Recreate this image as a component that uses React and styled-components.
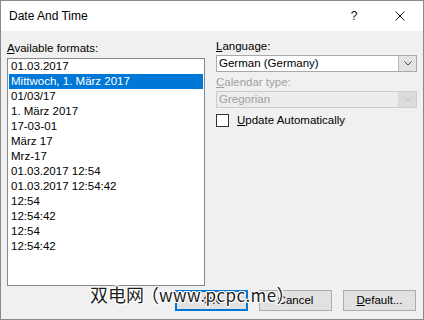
import React from "react";
import styled, { createGlobalStyle } from "styled-components";

const Global = createGlobalStyle`
  html, body { margin: 0; padding: 0; background: #fff; }
  * { box-sizing: border-box; }
`;

const Window = styled.div`
  position: relative;
  width: 424px;
  height: 320px;
  border: 1px solid #8a8a8a;
  background: #f0f0f0;
  display: flex;
  flex-direction: column;
  font-family: "Liberation Sans", Arial, sans-serif;
  font-size: 11.5px;
  color: #000;
  overflow: hidden;
`;

const TitleBar = styled.div`
  height: 30px;
  flex: none;
  background: #fff;
  display: flex;
  align-items: center;
`;

const Title = styled.div`
  flex: 1;
  padding-left: 8px;
  font-size: 12px;
  padding-bottom: 1px;
`;

const CaptionButton = styled.div`
  width: 46px;
  height: 30px;
  display: flex;
  align-items: center;
  justify-content: center;
  font-size: 12px;
  color: #111;
`;

const Body = styled.div`
  flex: 1;
  display: flex;
  flex-direction: column;
  padding: 8px 6px 8px 6px;
`;

const Main = styled.div`
  display: flex;
  gap: 11px;
`;

const LeftCol = styled.div`
  width: 198px;
  margin-top: 2px;
  display: flex;
  flex-direction: column;
`;

const RightCol = styled.div`
  width: 201px;
  display: flex;
  flex-direction: column;
`;

const Label = styled.div`
  height: 15px;
  line-height: 15px;
  color: ${(p) => (p.$disabled ? "#a0a0a0" : "#000")};
  margin-top: ${(p) => p.$top || 0}px;
  white-space: nowrap;
`;

const Key = styled.span`
  text-decoration: underline;
  text-underline-offset: 1px;
`;

const List = styled.div`
  margin-top: 2px;
  height: 228px;
  border: 1px solid #828790;
  background: #fff;
  padding: 0 1px;
  overflow: hidden;
`;

const Item = styled.div`
  height: 15px;
  line-height: 15px;
  padding-left: 2px;
  white-space: nowrap;
  background: ${(p) => (p.$selected ? "#0078d7" : "transparent")};
  color: ${(p) => (p.$selected ? "#fff" : "#000")};
`;

const Combo = styled.div`
  margin-top: 1px;
  height: 17px;
  display: flex;
  border: 1px solid ${(p) => (p.$disabled ? "#cccccc" : "#a9a9a9")};
  background: ${(p) => (p.$disabled ? "#ececec" : "#fff")};
  color: ${(p) => (p.$disabled ? "#a0a0a0" : "#000")};
`;

const ComboText = styled.div`
  flex: 1;
  line-height: 15px;
  padding-left: 2px;
  white-space: nowrap;
`;

const ComboButton = styled.div`
  width: 18px;
  display: flex;
  align-items: center;
  justify-content: center;
  border-left: 1px solid ${(p) => (p.$disabled ? "#d6d6d6" : "#b9b9b9")};
  background: ${(p) => (p.$disabled ? "#dcdcdc" : "#e3e3e3")};
`;

const CheckRow = styled.div`
  margin-top: 6px;
  height: 13px;
  display: flex;
  align-items: center;
  gap: 8px;
  line-height: 13px;
`;

const CheckBox = styled.div`
  width: 13px;
  height: 13px;
  border: 1px solid #333;
  background: #fff;
`;

const Footer = styled.div`
  margin-top: 4px;
  padding-right: 1px;
  display: flex;
  justify-content: flex-end;
  gap: 11px;
`;

const Button = styled.div`
  width: 73px;
  height: 21px;
  border: ${(p) => (p.$default ? "2px solid #0078d7" : "1px solid #adadad")};
  background: #e1e1e1;
  display: flex;
  align-items: center;
  justify-content: center;
  line-height: 19px;
`;

const Watermark = styled.div`
  position: absolute;
  left: 89px;
  top: 282px;
  font-family: "Noto Sans CJK SC", sans-serif;
  font-size: 18px;
  line-height: 22px;
  color: #1c1c1c;
  white-space: nowrap;
  text-shadow: 1px 0 0 #fff, -1px 0 0 #fff, 0 1px 0 #fff, 0 -1px 0 #fff,
    1px 1px 0 #fff, -1px -1px 0 #fff, 1px -1px 0 #fff, -1px 1px 0 #fff;
`;

const WatermarkParen = styled.span`
  margin-left: -3px;
`;

const WatermarkLatin = styled.span`
  font-size: 17px;
  letter-spacing: 0.4px;
`;

const Chevron = ({ color }) => (
  <svg width="8" height="5" viewBox="0 0 8 5">
    <polyline points="0.5,0.5 4,4 7.5,0.5" fill="none" stroke={color} strokeWidth="1" />
  </svg>
);

const CloseIcon = () => (
  <svg width="10" height="10" viewBox="0 0 10 10">
    <path d="M0.5 0.5 L9.5 9.5 M9.5 0.5 L0.5 9.5" stroke="#111" strokeWidth="1" />
  </svg>
);

const formats = [
  "01.03.2017",
  "Mittwoch, 1. März 2017",
  "01/03/17",
  "1. März 2017",
  "17-03-01",
  "März 17",
  "Mrz-17",
  "01.03.2017 12:54",
  "01.03.2017 12:54:42",
  "12:54",
  "12:54:42",
  "12:54",
  "12:54:42",
];

export default function App() {
  return (
    <>
      <Global />
      <Window>
        <TitleBar>
          <Title>Date And Time</Title>
          <CaptionButton>?</CaptionButton>
          <CaptionButton>
            <CloseIcon />
          </CaptionButton>
        </TitleBar>
        <Body>
          <Main>
            <LeftCol>
              <Label>
                <Key>A</Key>vailable formats:
              </Label>
              <List>
                {formats.map((f, i) => (
                  <Item key={i} $selected={i === 1}>
                    {f}
                  </Item>
                ))}
              </List>
            </LeftCol>
            <RightCol>
              <Label>
                <Key>L</Key>anguage:
              </Label>
              <Combo>
                <ComboText>German (Germany)</ComboText>
                <ComboButton>
                  <Chevron color="#444" />
                </ComboButton>
              </Combo>
              <Label $disabled $top={3}>
                <Key>C</Key>alendar type:
              </Label>
              <Combo $disabled>
                <ComboText>Gregorian</ComboText>
                <ComboButton $disabled>
                  <Chevron color="#b8b8b8" />
                </ComboButton>
              </Combo>
              <CheckRow>
                <CheckBox />
                <span>
                  <Key>U</Key>pdate Automatically
                </span>
              </CheckRow>
            </RightCol>
          </Main>
          <Footer>
            <Button $default>OK</Button>
            <Button>Cancel</Button>
            <Button>
              <span>
                <Key>D</Key>efault...
              </span>
            </Button>
          </Footer>
        </Body>
        <Watermark>
          双电网<WatermarkParen>（</WatermarkParen>
          <WatermarkLatin>www.pcpc.me</WatermarkLatin>）
        </Watermark>
      </Window>
    </>
  );
}
